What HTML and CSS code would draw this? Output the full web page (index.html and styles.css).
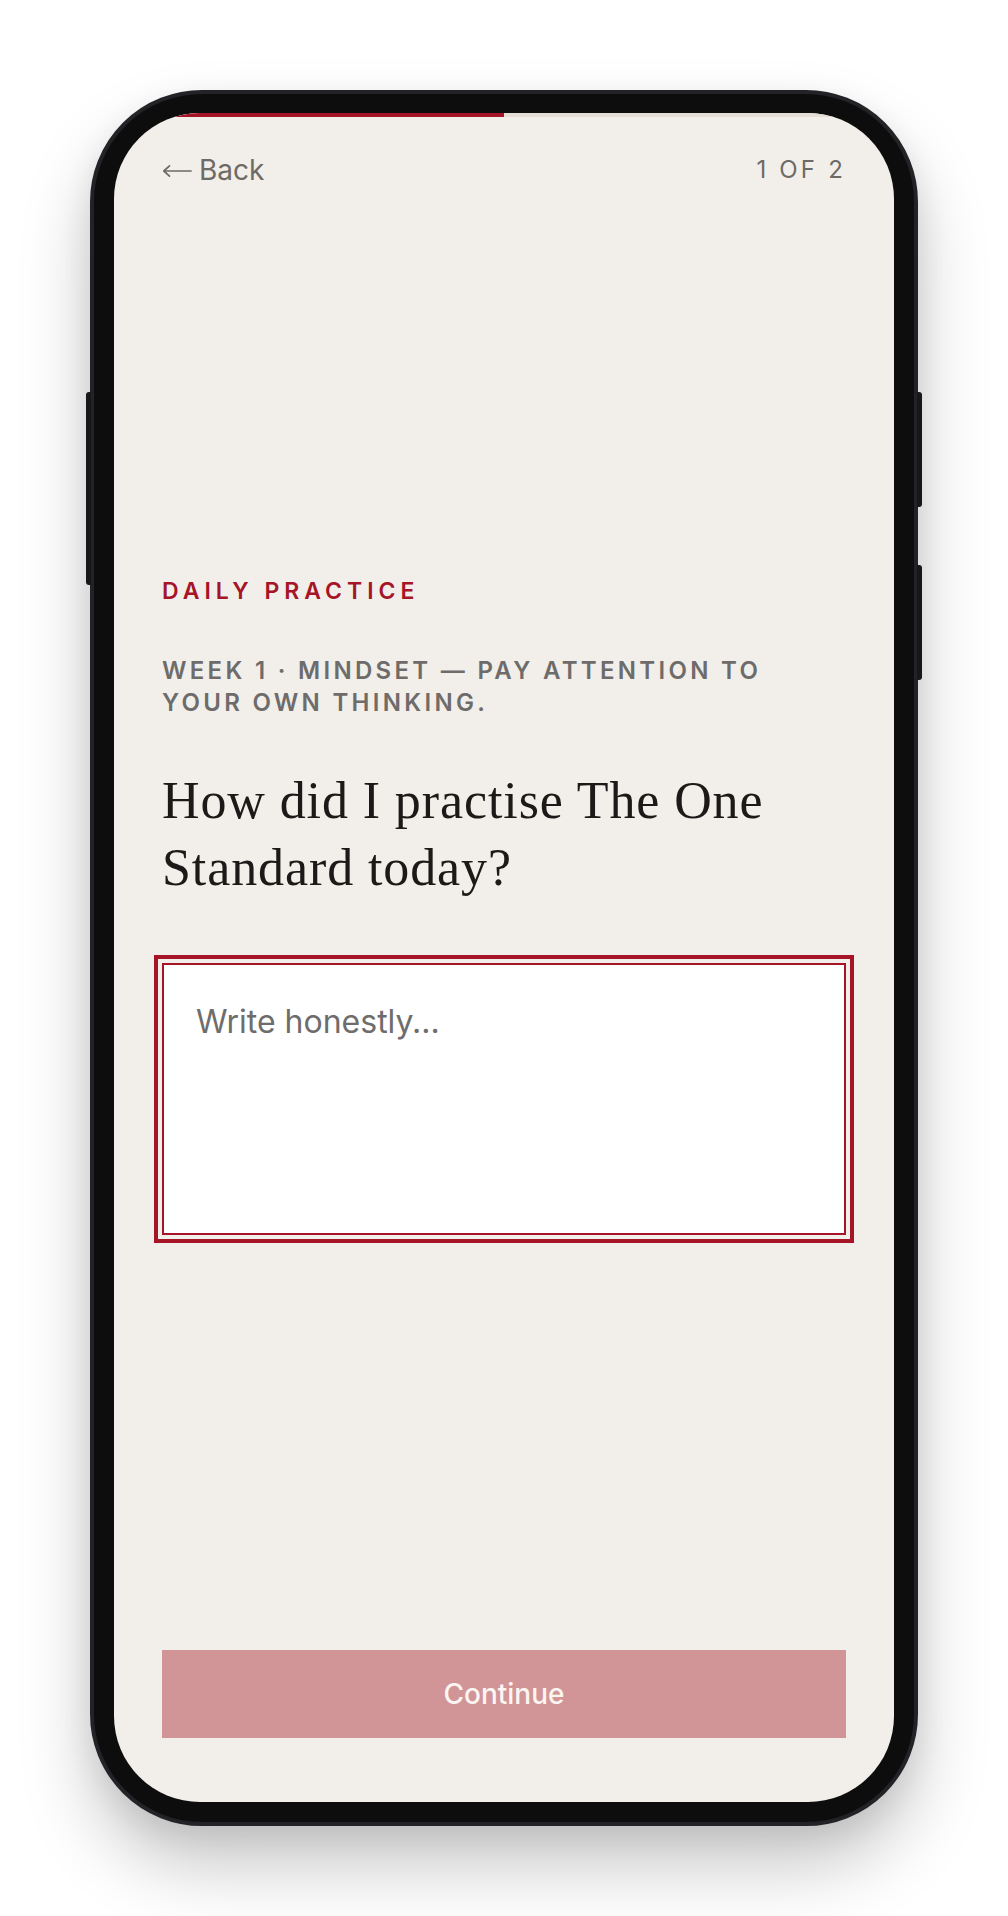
FILE: index.html
```html
<!DOCTYPE html>
<html lang="en">
<head>
<meta charset="utf-8">
<title>Daily Practice</title>
<link rel="stylesheet" href="styles.css">
</head>
<body>
<div class="stage">
  <div class="phone">
    <span class="side-btn side-left"></span>
    <span class="side-btn side-right-1"></span>
    <span class="side-btn side-right-2"></span>
    <div class="screen">
      <div class="progress"><div class="progress-fill" style="width: 50%"></div></div>
      <header class="topbar">
        <a class="back" href="#"><svg class="arrow" width="30" height="14" viewBox="0 0 30 14" aria-hidden="true"><path d="M29 7H2M7.5 1.8L1.8 7l5.7 5.2" fill="none" stroke="currentColor" stroke-width="1.7" stroke-linecap="round" stroke-linejoin="round"/></svg>Back</a>
        <span class="step">1 OF 2</span>
      </header>
      <main class="content">
        <p class="eyebrow">DAILY PRACTICE</p>
        <p class="theme">WEEK 1 · MINDSET — PAY ATTENTION TO YOUR OWN THINKING.</p>
        <h1 class="question">How did I practise The One Standard today?</h1>
        <textarea class="answer" placeholder="Write honestly..."></textarea>
      </main>
      <footer class="actions">
        <button class="continue" type="button">Continue</button>
      </footer>
    </div>
  </div>
</div>
</body>
</html>
```
FILE: styles.css
```css
* { box-sizing: border-box; }

html, body {
  margin: 0;
  padding: 0;
  background: #ffffff;
}

body {
  font-family: "Inter", "Noto Sans", sans-serif;
}

.stage {
  width: 1008px;
  height: 1916px;
  padding: 90px 90px;
  display: flex;
  justify-content: center;
}

.phone {
  position: relative;
  width: 828px;
  height: 1736px;
  background: #0d0d0e;
  border: 4px solid #232327;
  border-radius: 112px;
  padding: 19px 20px 20px 20px;
  box-shadow: 0 40px 70px rgba(0, 0, 0, 0.22), 0 10px 30px rgba(0, 0, 0, 0.08);
}

.side-btn {
  position: absolute;
  width: 5px;
  background: #17171a;
}

.side-left {
  left: -8px;
  top: 298px;
  height: 193px;
  border-radius: 3px 0 0 3px;
}

.side-right-1 {
  right: -8px;
  top: 298px;
  height: 115px;
  border-radius: 0 3px 3px 0;
}

.side-right-2 {
  right: -8px;
  top: 471px;
  height: 115px;
  border-radius: 0 3px 3px 0;
}

.screen {
  height: 100%;
  background: #f2efea;
  border-radius: 86px;
  overflow: hidden;
  display: flex;
  flex-direction: column;
}

.progress {
  height: 4px;
  background: #e4ded6;
  flex: none;
}

.progress-fill {
  height: 100%;
  background: #a51527;
}

.topbar {
  display: flex;
  justify-content: space-between;
  align-items: center;
  padding: 31px 48px 31px 48px;
  height: 106px;
}

.back {
  display: flex;
  align-items: center;
  gap: 7px;
  font-size: 28px;
  line-height: 42px;
  color: #6e6a66;
  text-decoration: none;
  letter-spacing: 0;
}

.back .arrow {
  display: block;
  margin-top: 1px;
}

.step {
  font-size: 24px;
  line-height: 42px;
  letter-spacing: 3.2px;
  color: #6e6a66;
  margin-right: 0;
}

.content {
  flex: 1;
  display: flex;
  flex-direction: column;
  justify-content: center;
  padding: 0 48px;
}

.eyebrow {
  margin: 0 0 48px 0;
  font-size: 23px;
  line-height: 32px;
  font-weight: 600;
  letter-spacing: 5px;
  color: #a51527;
}

.theme {
  margin: 0 0 48px 0;
  font-size: 24px;
  line-height: 32px;
  font-weight: 600;
  letter-spacing: 3.3px;
  color: #6e6c6a;
}

.question {
  margin: 0 0 62px 0;
  font-family: "Liberation Serif", "Times New Roman", serif;
  font-weight: 400;
  font-size: 52px;
  line-height: 67px;
  letter-spacing: 0.9px;
  color: #1c1a18;
}

.answer {
  display: block;
  width: 100%;
  height: 272px;
  margin: 0;
  padding: 32px 32px;
  border: 2px solid #a51527;
  outline: 4px solid #a51527;
  outline-offset: 4px;
  border-radius: 0;
  background: #ffffff;
  font-family: "Inter", "Noto Sans", sans-serif;
  font-size: 32px;
  line-height: 50px;
  color: #1c1a18;
  resize: none;
}

.answer::placeholder {
  color: #6f6d6b;
}

.actions {
  padding: 64px 48px 64px 48px;
  flex: none;
}

.continue {
  display: block;
  width: 100%;
  height: 88px;
  border: 0;
  background: #d19497;
  color: #fbf6f2;
  font-family: "Inter", "Noto Sans", sans-serif;
  font-size: 28px;
  font-weight: 500;
}
```
